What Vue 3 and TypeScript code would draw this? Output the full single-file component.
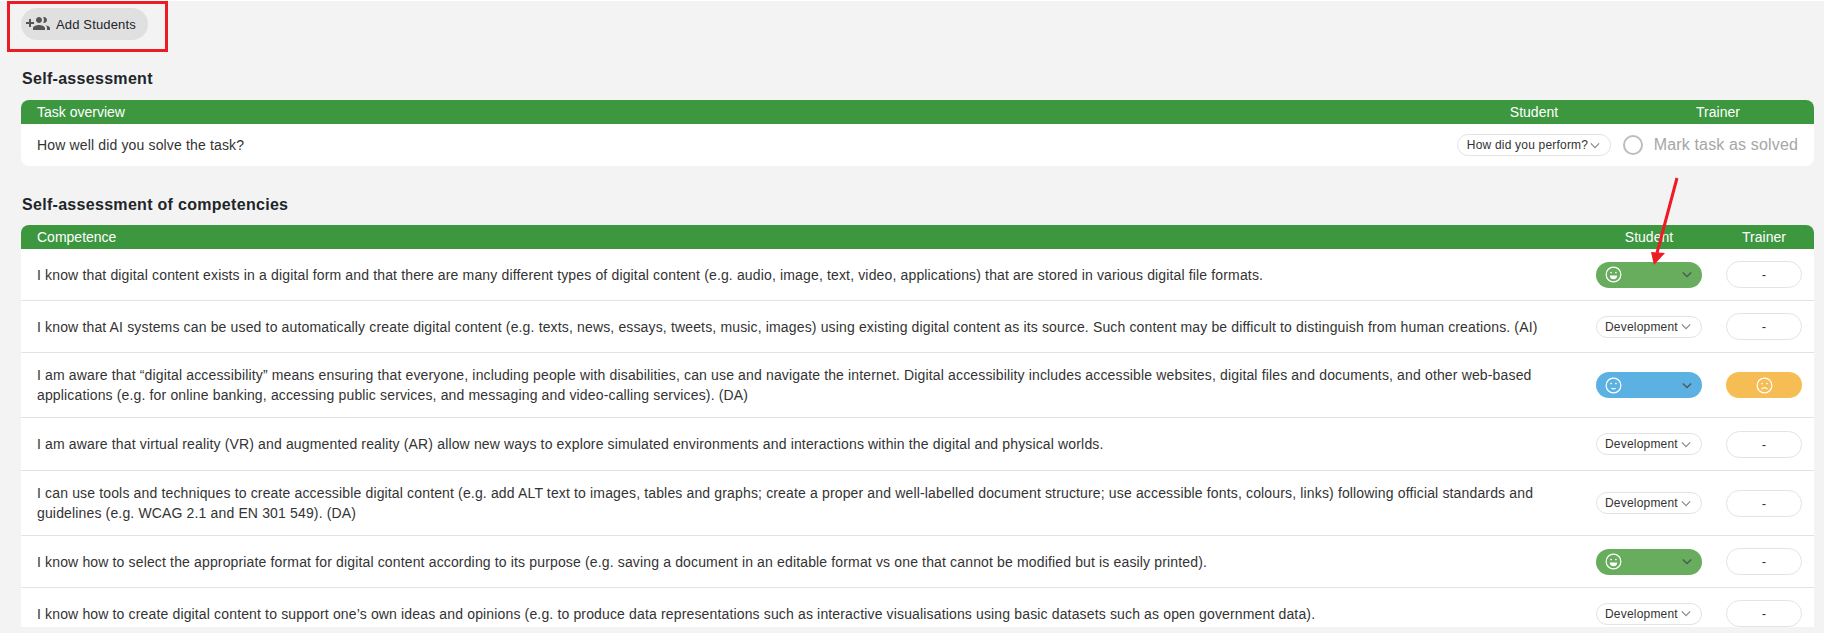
<script setup lang="ts">
type Mood = 'happy' | 'neutral' | 'sad'
interface Row {
  text: string
  student?: { mood: Mood; tone: string }
  trainer?: { mood: Mood; tone: string }
  height: number
}
const rows: Row[] = [
  { text: 'I know that digital content exists in a digital form and that there are many different types of digital content (e.g. audio, image, text, video, applications) that are stored in various digital file formats.', student: { mood: 'happy', tone: 'green' }, height: 52 },
  { text: 'I know that AI systems can be used to automatically create digital content (e.g. texts, news, essays, tweets, music, images) using existing digital content as its source. Such content may be difficult to distinguish from human creations. (AI)', height: 52 },
  { text: 'I am aware that “digital accessibility” means ensuring that everyone, including people with disabilities, can use and navigate the internet. Digital accessibility includes accessible websites, digital files and documents, and other web-based applications (e.g. for online banking, accessing public services, and messaging and video-calling services). (DA)', student: { mood: 'neutral', tone: 'blue' }, trainer: { mood: 'sad', tone: 'orange' }, height: 65 },
  { text: 'I am aware that virtual reality (VR) and augmented reality (AR) allow new ways to explore simulated environments and interactions within the digital and physical worlds.', height: 53 },
  { text: 'I can use tools and techniques to create accessible digital content (e.g. add ALT text to images, tables and graphs; create a proper and well-labelled document structure; use accessible fonts, colours, links) following official standards and guidelines (e.g. WCAG 2.1 and EN 301 549). (DA)', height: 65 },
  { text: 'I know how to select the appropriate format for digital content according to its purpose (e.g. saving a document in an editable format vs one that cannot be modified but is easily printed).', student: { mood: 'happy', tone: 'green' }, height: 52 },
  { text: 'I know how to create digital content to support one’s own ideas and opinions (e.g. to produce data representations such as interactive visualisations using basic datasets such as open government data).', height: 51 },
]
const mouths: Record<Mood, string> = {
  happy: 'M6.8 13.4h10.4a5.2 5.2 0 0 1-10.4 0z',
  neutral: 'M9 16c1.8 .9 4.2 .9 6 0',
  sad: 'M8 17c2.3-2.6 5.7-2.6 8 0',
}
</script>

<template>
  <main class="page">
    <div class="toolbar">
      <button class="add" type="button">
        <svg class="add-icon" viewBox="0 0 24 24" aria-hidden="true">
          <path d="M8 10H5V7H3v3H0v2h3v3h2v-3h3v-2zm10 1c1.66 0 2.99-1.34 2.99-3S19.66 5 18 5c-.32 0-.63.05-.91.14.57.81.9 1.79.9 2.86s-.34 2.04-.9 2.86c.28.09.59.14.91.14zm-5 0c1.66 0 2.99-1.34 2.99-3S14.66 5 13 5s-3 1.34-3 3 1.34 3 3 3zm6.62 2.16c.83.73 1.38 1.66 1.38 2.84v2h3v-2c0-1.54-2.37-2.49-4.38-2.84zM13 13c-2 0-6 1-6 3v2h12v-2c0-2-4-3-6-3z" />
        </svg>
        <span>Add Students</span>
      </button>
    </div>

    <h2 class="title first">Self-assessment</h2>
    <section class="card">
      <header class="head task-head">
        <span class="head-main">Task overview</span>
        <span class="head-student">Student</span>
        <span class="head-trainer">Trainer</span>
      </header>
      <div class="task-row">
        <span class="task-q">How well did you solve the task?</span>
        <div class="select task-select">
          <span>How did you perform?</span>
          <svg class="chev" viewBox="0 0 12 8"><path d="M1 1.5l5 5 5-5" /></svg>
        </div>
        <span class="radio"></span>
        <span class="solved">Mark task as solved</span>
      </div>
    </section>

    <h2 class="title second">Self-assessment of competencies</h2>
    <section class="card last">
      <header class="head comp-head">
        <span class="head-main">Competence</span>
        <span class="head-student">Student</span>
        <span class="head-trainer">Trainer</span>
      </header>
      <div v-for="(row, i) in rows" :key="i" class="row" :style="{ height: row.height + 'px' }">
        <p class="row-text">{{ row.text }}</p>
        <div class="student-col">
          <div v-if="row.student" class="pill" :class="row.student.tone">
            <svg class="face" viewBox="0 0 24 24">
              <circle class="ring" cx="12" cy="12" r="10.4" />
              <circle class="eye" cx="8.6" cy="9.2" r="1.2" />
              <circle class="eye" cx="15.4" cy="9.2" r="1.2" />
              <path :class="row.student.mood === 'happy' ? 'mouth-fill' : 'mouth'" :d="mouths[row.student.mood]" />
            </svg>
            <svg class="chev dark" viewBox="0 0 12 8"><path d="M1 1.5l5 5 5-5" /></svg>
          </div>
          <div v-else class="select dev">
            <span>Development</span>
            <svg class="chev" viewBox="0 0 12 8"><path d="M1 1.5l5 5 5-5" /></svg>
          </div>
        </div>
        <div class="trainer-col">
          <div v-if="row.trainer" class="trainer filled" :class="row.trainer.tone">
            <svg class="face" viewBox="0 0 24 24">
              <circle class="ring" cx="12" cy="12" r="10.4" />
              <circle class="eye" cx="8.6" cy="9.2" r="1.2" />
              <circle class="eye" cx="15.4" cy="9.2" r="1.2" />
              <path class="mouth" :d="mouths[row.trainer.mood]" />
            </svg>
          </div>
          <div v-else class="trainer">-</div>
        </div>
      </div>
    </section>

    <div class="red-box"></div>
    <svg class="arrow" width="60" height="110" viewBox="0 0 60 110">
      <path d="M33 3L13 78" stroke="#ed1c24" stroke-width="3" fill="none" />
      <path d="M7 77L21 78L10 90z" fill="#ed1c24" />
    </svg>
  </main>
</template>

<style>
html, body { margin: 0; background: #f3f3f3; }
</style>

<style scoped>
.page {
  position: relative;
  box-sizing: border-box;
  height: 633px;
  padding: 8px 10px 0 21px;
  overflow: hidden;
  background: #f3f3f3;
  border-top: 1px solid #fff;
  font-family: "Liberation Sans", Arial, sans-serif;
  color: #212529;
}
.toolbar { height: 32px; margin-top: -1px; }
.add {
  display: flex;
  align-items: center;
  gap: 6px;
  width: 127px;
  height: 32px;
  padding: 0 0 0 5px;
  border: 0;
  border-radius: 16px;
  background: #e0e0e0;
  font: 13px "Liberation Sans", Arial, sans-serif;
  letter-spacing: 0.15px;
  color: #212529;
}
.add-icon { width: 24px; height: 24px; fill: #555; flex: none; }
.title {
  margin: 0 0 0 1px;
  font-size: 16px;
  line-height: 20px;
  font-weight: 700;
  letter-spacing: 0.3px;
  color: #212529;
}
.title.first { margin-top: 29px; margin-bottom: 11px; }
.title.second { margin-top: 29px; margin-bottom: 10px; }
.card { border-radius: 8px; overflow: hidden; background: #fff; }
.card.last { border-radius: 8px 8px 0 0; height: 402px; }
.head {
  display: flex;
  align-items: center;
  height: 24px;
  background: #3c973f;
  color: #fff;
  font-size: 14px;
  position: relative;
}
.head-main { padding-left: 16px; flex: 1; }
.head-student, .head-trainer { text-align: center; flex: none; }
.task-head .head-student { width: 100px; margin-right: 84px; }
.task-head .head-trainer { width: 100px; margin-right: 46px; }
.comp-head .head-student { width: 106px; margin-right: 24px; }
.comp-head .head-trainer { width: 76px; margin-right: 12px; }
.task-row {
  display: flex;
  align-items: center;
  height: 42px;
  padding: 0 16px;
  font-size: 14px;
}
.task-q { flex: 1; letter-spacing: 0.15px; color: #333; }
.select {
  box-sizing: border-box;
  display: flex;
  align-items: center;
  height: 22px;
  border: 1px solid #e3e3e3;
  border-radius: 11px;
  background: #fff;
  font-size: 12px;
  letter-spacing: 0.2px;
  color: #333;
}
.task-select { width: 154px; padding-left: 9px; gap: 2px; }
.dev { width: 106px; padding-left: 8px; justify-content: space-between; padding-right: 10px; }
.chev { width: 10px; height: 7px; flex: none; }
.chev path { fill: none; stroke: #888; stroke-width: 1.4; }
.chev.dark path { stroke: #4c5a52; stroke-width: 1.6; }
.radio {
  box-sizing: border-box;
  width: 20px;
  height: 20px;
  margin-left: 12px;
  border: 2px solid #bdbdbd;
  border-radius: 50%;
  flex: none;
}
.solved { margin-left: 11px; font-size: 16px; letter-spacing: 0.15px; color: #a6a6a6; white-space: nowrap; }
.row {
  box-sizing: border-box;
  display: flex;
  align-items: center;
  padding-left: 16px;
  border-bottom: 1px solid #e2e2e2;
  font-size: 14px;
}
.row:last-child { border-bottom: 0; }
.row-text {
  flex: 1;
  margin: 0;
  padding-right: 45px;
  line-height: 20px;
  letter-spacing: 0.15px;
  color: #333;
}
.student-col { flex: none; width: 106px; margin-right: 24px; }
.trainer-col { flex: none; width: 76px; margin-right: 12px; }
.pill {
  box-sizing: border-box;
  display: flex;
  align-items: center;
  justify-content: space-between;
  height: 26px;
  padding: 0 10px 0 9px;
  border-radius: 13px;
}
.green { background: #68ad5e; }
.blue { background: #5bb2e2; }
.orange { background: #f6bd55; }
.trainer {
  box-sizing: border-box;
  display: flex;
  align-items: center;
  justify-content: center;
  height: 27px;
  border: 1px solid #e3e3e3;
  border-radius: 14px;
  font-size: 13px;
  color: #333;
}
.trainer.filled { height: 26px; border: 0; }
.face { width: 17px; height: 17px; }
.ring { fill: none; stroke: #fff; stroke-width: 1.7; }
.eye { fill: #fff; }
.mouth { fill: none; stroke: #fff; stroke-width: 1.6; }
.mouth-fill { fill: #fff; }
.red-box {
  position: absolute;
  left: 7px;
  top: 0;
  box-sizing: border-box;
  width: 161px;
  height: 51px;
  border: 3px solid #ed1c24;
  pointer-events: none;
}
.arrow { position: absolute; left: 1644px; top: 174px; }
</style>
